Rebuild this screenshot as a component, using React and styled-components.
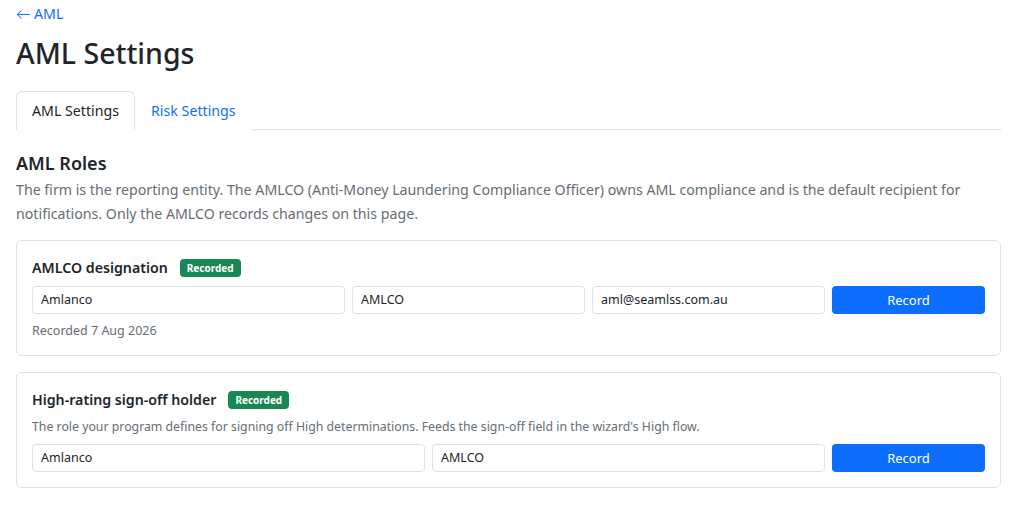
import React from "react";
import styled, { createGlobalStyle } from "styled-components";

const GlobalStyle = createGlobalStyle`
  * { box-sizing: border-box; }
  body {
    margin: 0;
    background: #fff;
    color: #212529;
    font-family: "Noto Sans", "Open Sans", Arial, sans-serif;
    font-size: 14px;
    line-height: 1.5;
  }
`;

const Page = styled.div`
  padding: 2px 23px 20px 16px;
`;

const BackLink = styled.a`
  display: inline-flex;
  align-items: center;
  gap: 3px;
  color: #0d6efd;
  font-size: 14.2px;
  line-height: 24px;
  text-decoration: none;
`;

const Title = styled.h1`
  margin: 8px 0 20px;
  font-size: 28.5px;
  font-weight: 500;
  line-height: 36px;
`;

const Tabs = styled.nav`
  display: flex;
  border-bottom: 1px solid #dee2e6;
`;

const Tab = styled.a`
  padding: 7px 15px 6px;
  margin-bottom: -1px;
  font-size: 14.2px;
  line-height: 24px;
  text-decoration: none;
  border: 1px solid ${(p) => (p.$active ? "#dee2e6" : "transparent")};
  border-bottom-color: ${(p) => (p.$active ? "#fff" : "transparent")};
  border-radius: 6px 6px 0 0;
  color: ${(p) => (p.$active ? "#212529" : "#0d6efd")};
  background: #fff;
`;

const Section = styled.section`
  padding-top: 20px;
`;

const SectionTitle = styled.h2`
  margin: 0 0 2px;
  font-size: 18px;
  font-weight: 600;
  line-height: 26px;
`;

const Lead = styled.p`
  margin: 0 0 14px;
  color: #666d74;
  font-size: 14.2px;
  line-height: 24px;
`;

const Card = styled.div`
  border: 1px solid #dee2e6;
  border-radius: 6px;
  padding: 15px;
  margin-bottom: 16px;
`;

const CardHead = styled.div`
  display: flex;
  align-items: center;
  gap: 12px;
  height: 24px;
  margin-bottom: 6px;
`;

const CardTitle = styled.h3`
  margin: 0;
  font-size: 14.2px;
  font-weight: 600;
  line-height: 24px;
`;

const Badge = styled.span`
  display: inline-block;
  background: #198754;
  color: #fff;
  font-size: 10px;
  font-weight: 700;
  line-height: 18px;
  padding: 0 7px;
  border-radius: 4px;
`;

const Hint = styled.p`
  margin: 0 0 8px;
  color: #666d74;
  font-size: 12.3px;
  line-height: 18px;
`;

const FieldRow = styled.div`
  display: grid;
  grid-template-columns: ${(p) => p.$cols};
  gap: 7px;
`;

const Input = styled.input`
  height: 28px;
  width: 100%;
  min-width: 0;
  padding: 0 8px;
  border: 1px solid #dee2e6;
  border-radius: 4px;
  font-family: inherit;
  font-size: 12.5px;
  color: #212529;
  background: #fff;
`;

const Button = styled.button`
  height: 28px;
  border: none;
  border-radius: 4px;
  background: #0d6efd;
  color: #fff;
  font-family: inherit;
  font-size: 13px;
`;

const Meta = styled.div`
  margin-top: 8px;
  color: #666d74;
  font-size: 12.5px;
  line-height: 18px;
`;

function ArrowLeft() {
  return (
    <svg width="15" height="15" viewBox="0 0 16 16" fill="currentColor">
      <path
        fillRule="evenodd"
        d="M15 8a.5.5 0 0 0-.5-.5H2.707l3.147-3.146a.5.5 0 1 0-.708-.708l-4 4a.5.5 0 0 0 0 .708l4 4a.5.5 0 0 0 .708-.708L2.707 8.5H14.5A.5.5 0 0 0 15 8"
      />
    </svg>
  );
}

export default function App() {
  return (
    <>
      <GlobalStyle />
      <Page>
        <BackLink href="#">
          <ArrowLeft />
          AML
        </BackLink>
        <Title>AML Settings</Title>
        <Tabs>
          <Tab href="#" $active>
            AML Settings
          </Tab>
          <Tab href="#">Risk Settings</Tab>
        </Tabs>

        <Section>
          <SectionTitle>AML Roles</SectionTitle>
          <Lead>
            The firm is the reporting entity. The AMLCO (Anti-Money Laundering
            Compliance Officer) owns AML compliance and is the default recipient
            for notifications. Only the AMLCO records changes on this page.
          </Lead>

          <Card>
            <CardHead>
              <CardTitle>AMLCO designation</CardTitle>
              <Badge>Recorded</Badge>
            </CardHead>
            <FieldRow $cols="313fr 233fr 233fr 153fr">
              <Input defaultValue="Amlanco" />
              <Input defaultValue="AMLCO" />
              <Input defaultValue="aml@seamlss.com.au" />
              <Button>Record</Button>
            </FieldRow>
            <Meta>Recorded 7 Aug 2026</Meta>
          </Card>

          <Card>
            <CardHead>
              <CardTitle>High-rating sign-off holder</CardTitle>
              <Badge>Recorded</Badge>
            </CardHead>
            <Hint>
              The role your program defines for signing off High determinations.
              Feeds the sign-off field in the wizard's High flow.
            </Hint>
            <FieldRow $cols="393fr 393fr 153fr">
              <Input defaultValue="Amlanco" />
              <Input defaultValue="AMLCO" />
              <Button>Record</Button>
            </FieldRow>
          </Card>
        </Section>
      </Page>
    </>
  );
}
